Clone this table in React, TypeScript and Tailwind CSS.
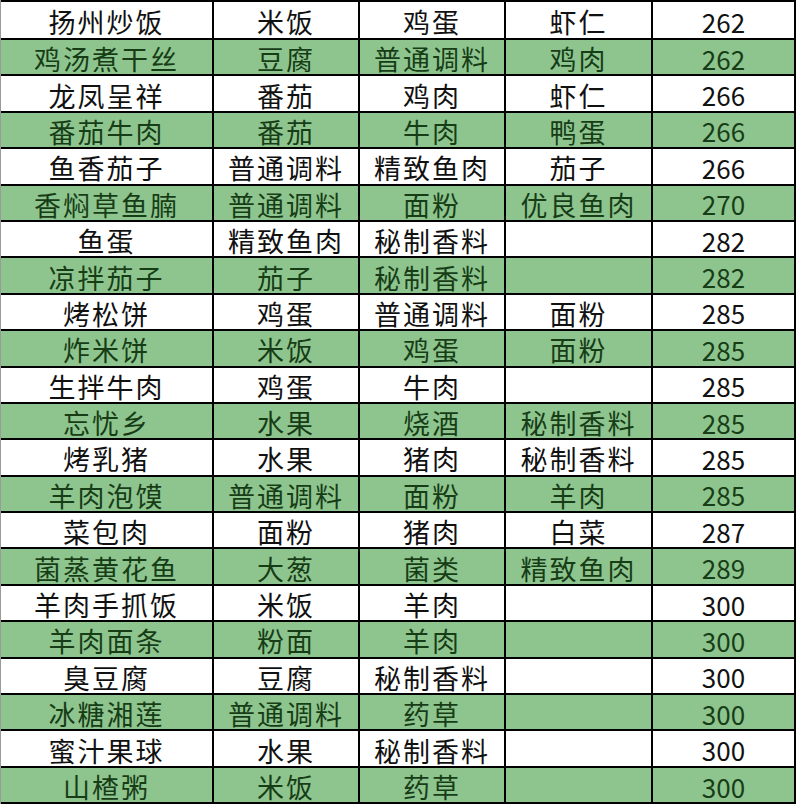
import React from "react";

type Row = [string, string, string, string, string];

const rows: Row[] = [
  ["扬州炒饭", "米饭", "鸡蛋", "虾仁", "262"],
  ["鸡汤煮干丝", "豆腐", "普通调料", "鸡肉", "262"],
  ["龙凤呈祥", "番茄", "鸡肉", "虾仁", "266"],
  ["番茄牛肉", "番茄", "牛肉", "鸭蛋", "266"],
  ["鱼香茄子", "普通调料", "精致鱼肉", "茄子", "266"],
  ["香焖草鱼腩", "普通调料", "面粉", "优良鱼肉", "270"],
  ["鱼蛋", "精致鱼肉", "秘制香料", "", "282"],
  ["凉拌茄子", "茄子", "秘制香料", "", "282"],
  ["烤松饼", "鸡蛋", "普通调料", "面粉", "285"],
  ["炸米饼", "米饭", "鸡蛋", "面粉", "285"],
  ["生拌牛肉", "鸡蛋", "牛肉", "", "285"],
  ["忘忧乡", "水果", "烧酒", "秘制香料", "285"],
  ["烤乳猪", "水果", "猪肉", "秘制香料", "285"],
  ["羊肉泡馍", "普通调料", "面粉", "羊肉", "285"],
  ["菜包肉", "面粉", "猪肉", "白菜", "287"],
  ["菌蒸黄花鱼", "大葱", "菌类", "精致鱼肉", "289"],
  ["羊肉手抓饭", "米饭", "羊肉", "", "300"],
  ["羊肉面条", "粉面", "羊肉", "", "300"],
  ["臭豆腐", "豆腐", "秘制香料", "", "300"],
  ["冰糖湘莲", "普通调料", "药草", "", "300"],
  ["蜜汁果球", "水果", "秘制香料", "", "300"],
  ["山楂粥", "米饭", "药草", "", "300"],
];

export default function App() {
  return (
    <div
      className="w-[800px] h-[806px] bg-white overflow-hidden"
      style={{ fontFamily: '"Noto Sans CJK SC", "Noto Sans", sans-serif' }}
    >
      <div className="w-[796px] border-l border-l-[#9a9a9a] bg-black pt-[2px] pb-[2px] pr-[2px]">
        <div className="grid grid-cols-[211px_144px_144px_145px_141px] grid-rows-[36px_repeat(21,34.4px)] gap-[2px]">
          {rows.map((row, i) => {
            const green = i % 2 === 1;
            return row.map((cell, j) => (
              <div
                key={`${i}-${j}`}
                className={`flex items-center justify-center leading-none pt-[3px] ${
                  green ? "bg-[#8ec58e] text-[#173d17]" : "bg-white text-[#111]"
                } ${j === 4 ? "text-[26px]" : "text-[27px] tracking-[2px]"}`}
              >
                {cell}
              </div>
            ));
          })}
        </div>
      </div>
    </div>
  );
}
